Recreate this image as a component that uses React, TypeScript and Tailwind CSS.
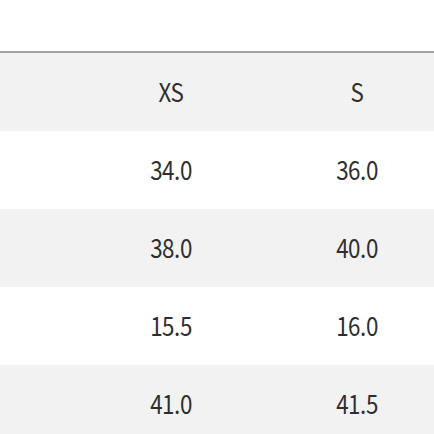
const header = ['XS', 'S'];

const rows = [
  ['34.0', '36.0'],
  ['38.0', '40.0'],
  ['15.5', '16.0'],
  ['41.0', '41.5'],
];

export default function App() {
  return (
    <div className="w-[434px] h-[434px] overflow-hidden bg-white text-[#2e2e2e] font-['Noto_Sans_CJK_SC',sans-serif]">
      <div className="h-[51px]" />
      <div className="border-t-2 border-[#a3a3a3]">
        <div className="grid grid-cols-[78px_186px_186px] h-[78px] items-center bg-[#f2f2f2] text-[26px] leading-none">
          <div />
          {header.map((h) => (
            <div key={h} className="text-center scale-x-[0.86] tracking-[-0.5px] -mt-[2px]">
              {h}
            </div>
          ))}
        </div>
        {rows.map((r, i) => (
          <div
            key={i}
            className={`grid grid-cols-[78px_186px_186px] h-[78px] items-center text-[26px] leading-none ${
              i % 2 === 1 ? 'bg-[#f2f2f2]' : 'bg-white'
            }`}
          >
            <div />
            {r.map((v, j) => (
              <div key={j} className="text-center scale-x-[0.86] tracking-[-0.5px] -mt-[2px]">
                {v}
              </div>
            ))}
          </div>
        ))}
      </div>
    </div>
  );
}
